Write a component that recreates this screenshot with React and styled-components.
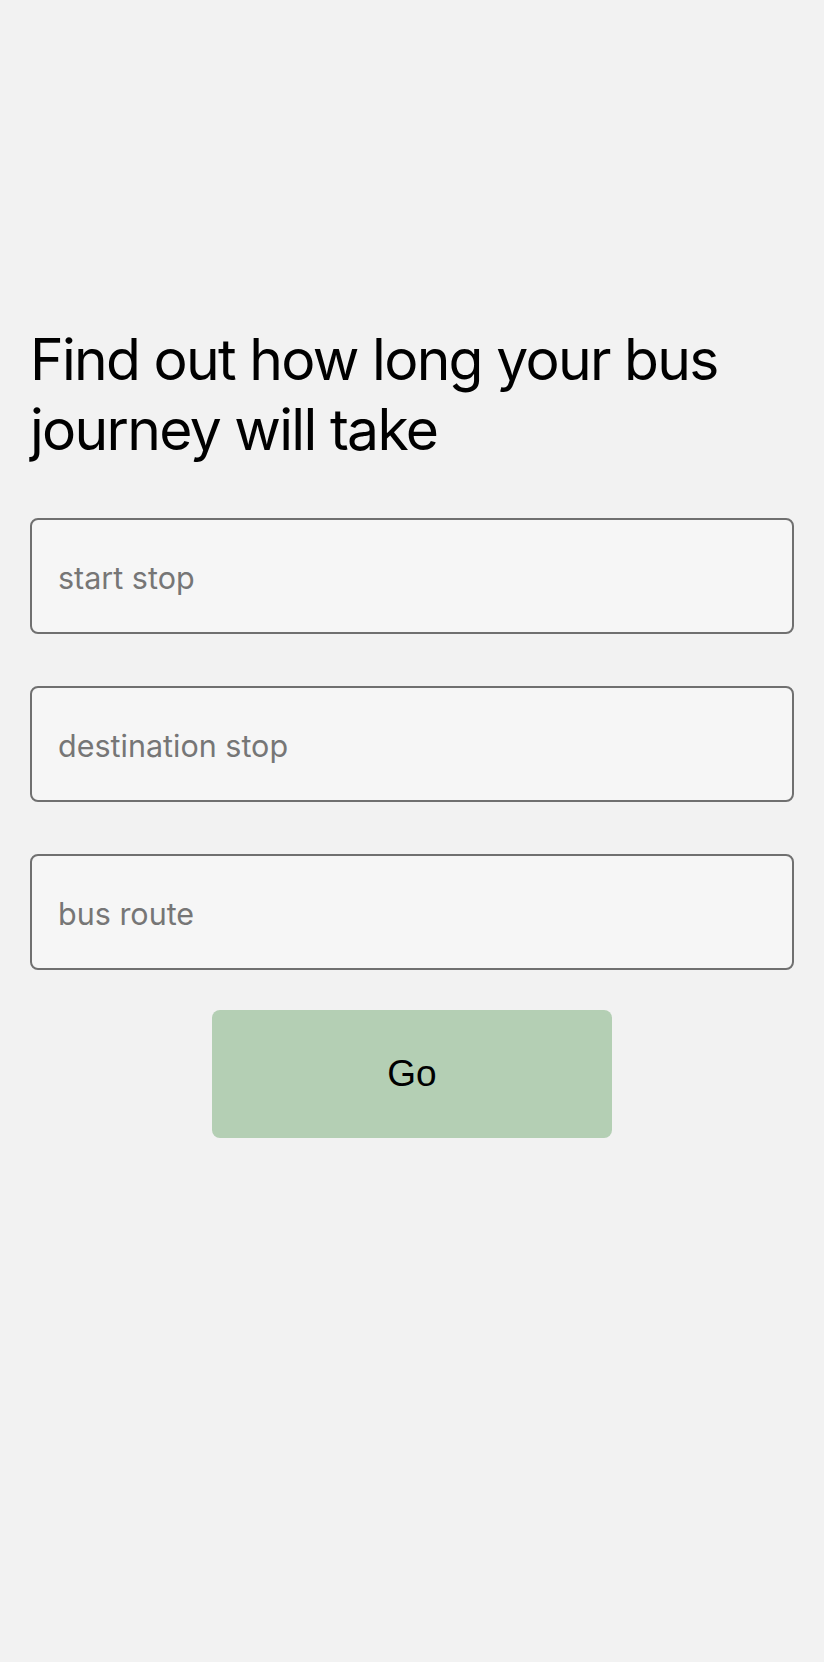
import React from 'react';
import styled, { createGlobalStyle } from 'styled-components';

const GlobalStyle = createGlobalStyle`
  html, body {
    margin: 0;
    padding: 0;
    background: #f2f2f2;
  }

  body {
    font-family: Inter, "Liberation Sans", sans-serif;
    color: #000;
  }
`;

const Page = styled.main`
  min-height: 1662px;
  box-sizing: border-box;
  padding: 325px 30px 0;
`;

const Title = styled.h1`
  margin: 0;
  font-size: 57px;
  line-height: 70px;
  font-weight: 400;
  letter-spacing: -1.7px;
`;

const Form = styled.form`
  display: flex;
  flex-direction: column;
  margin-top: 53px;
`;

const Fields = styled.div`
  display: flex;
  flex-direction: column;
  gap: 52px;
`;

const Input = styled.input`
  box-sizing: border-box;
  width: 100%;
  height: 116px;
  padding: 2px 26px 0;
  border: 2px solid #707070;
  border-radius: 8px;
  background: #f6f6f6;
  font-family: Inter, "Liberation Sans", sans-serif;
  font-size: 30.5px;
  color: #000;
  outline: none;

  &::placeholder {
    color: #767676;
  }
`;

const GoButton = styled.button`
  align-self: center;
  width: 400px;
  height: 128px;
  margin-top: 40px;
  border: none;
  border-radius: 8px;
  background: #b4cfb4;
  font-family: "Liberation Sans", Arial, sans-serif;
  font-size: 37px;
  color: #000;
  cursor: pointer;
`;

const fields = ['start stop', 'destination stop', 'bus route'];

export default function App() {
  return (
    <>
      <GlobalStyle />
      <Page>
        <Title>Find out how long your bus journey will take</Title>
        <Form onSubmit={(e) => e.preventDefault()}>
          <Fields>
            {fields.map((name) => (
              <Input key={name} type="text" placeholder={name} />
            ))}
          </Fields>
          <GoButton type="submit">Go</GoButton>
        </Form>
      </Page>
    </>
  );
}
